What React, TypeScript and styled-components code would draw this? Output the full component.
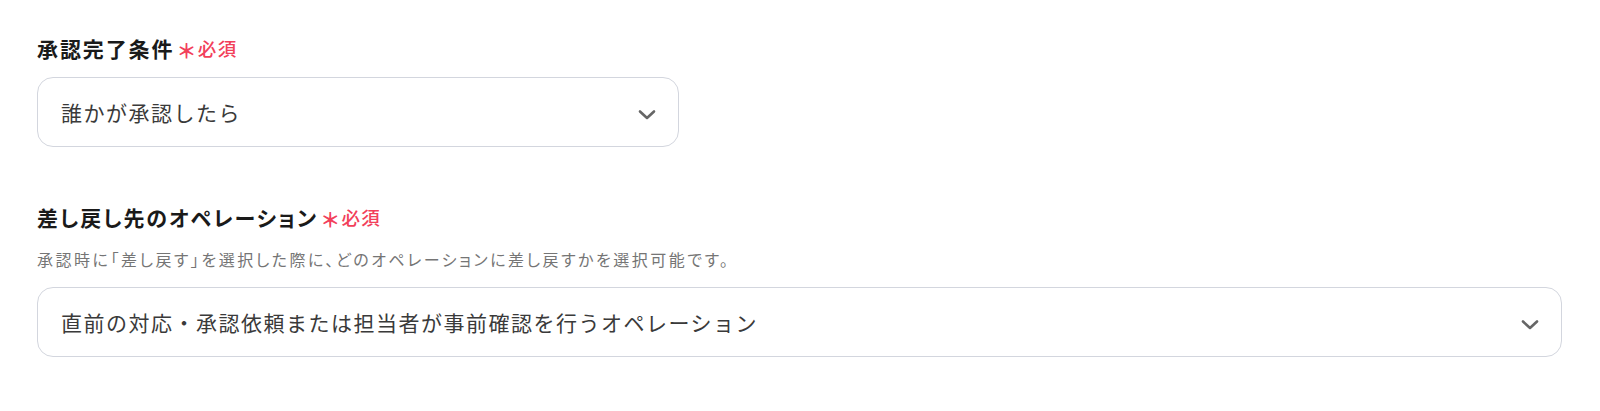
import React from "react";
import styled, { createGlobalStyle } from "styled-components";

const GlobalStyle = createGlobalStyle`
  html, body {
    margin: 0;
    padding: 0;
    background: #ffffff;
  }
  body {
    font-family: "Noto Sans CJK JP", "Noto Sans", sans-serif;
    color: #222;
  }
`;

const Page = styled.div`
  display: flex;
  flex-direction: column;
  padding: 34px 38px 40px 37px;
`;

const Field = styled.div<{ $gap?: number }>`
  display: flex;
  flex-direction: column;
  margin-top: ${(p) => p.$gap ?? 0}px;
`;

const Label = styled.div`
  display: flex;
  align-items: center;
  height: 28px;
  font-size: 21px;
  font-weight: 700;
  letter-spacing: 1.9px;
  font-feature-settings: "palt";
  color: #1a1a1a;
`;

const Required = styled.span`
  display: inline-flex;
  align-items: center;
  margin-left: 4px;
  color: #f2405a;
  font-weight: 500;
  letter-spacing: 0;
`;

const Star = styled.span`
  font-size: 20px;
  font-weight: 700;
  margin-right: 3px;
  transform: translateY(2px);
`;

const RequiredText = styled.span`
  font-size: 18.5px;
  letter-spacing: 0.08em;
`;

const Description = styled.div`
  margin-top: 17px;
  height: 22px;
  line-height: 22px;
  font-size: 16px;
  letter-spacing: 2.5px;
  font-feature-settings: "palt";
  color: #757575;
`;

const Select = styled.div<{ $width?: string; $top: number }>`
  box-sizing: border-box;
  display: flex;
  align-items: center;
  justify-content: space-between;
  width: ${(p) => p.$width ?? "100%"};
  height: 70px;
  margin-top: ${(p) => p.$top}px;
  padding: 0 22px 0 23px;
  border: 1px solid #d3d6de;
  border-radius: 16px;
  background: #fff;
  cursor: pointer;
`;

const Value = styled.span`
  font-size: 21px;
  letter-spacing: 1.5px;
  color: #3a3a3a;
`;

const Chevron = () => (
  <svg width="18" height="12" viewBox="0 0 18 12" style={{ marginTop: 6 }}>
    <path
      d="M2 2.5 L9 9 L16 2.5"
      fill="none"
      stroke="#666"
      strokeWidth="2.6"
      strokeLinecap="round"
      strokeLinejoin="round"
    />
  </svg>
);

const RequiredMark = () => (
  <Required>
    <Star>＊</Star>
    <RequiredText>必須</RequiredText>
  </Required>
);

export default function App() {
  return (
    <>
      <GlobalStyle />
      <Page>
        <Field>
          <Label>
            承認完了条件
            <RequiredMark />
          </Label>
          <Select $width="642px" $top={15}>
            <Value>誰かが承認したら</Value>
            <Chevron />
          </Select>
        </Field>
        <Field $gap={56}>
          <Label>
            差し戻し先のオペレーション
            <RequiredMark />
          </Label>
          <Description>
            承認時に「差し戻す」を選択した際に、どのオペレーションに差し戻すかを選択可能です。
          </Description>
          <Select $top={17}>
            <Value>直前の対応・承認依頼または担当者が事前確認を行うオペレーション</Value>
            <Chevron />
          </Select>
        </Field>
      </Page>
    </>
  );
}
